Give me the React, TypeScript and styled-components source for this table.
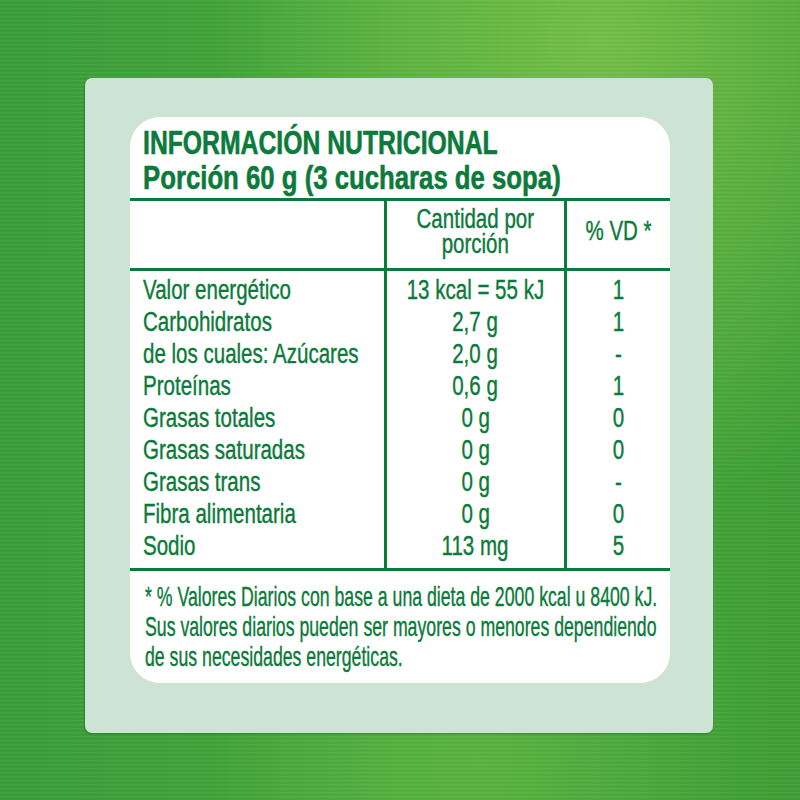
import React from 'react';
import styled, { createGlobalStyle } from 'styled-components';

const GlobalStyle = createGlobalStyle`
  html, body {
    margin: 0;
    padding: 0;
  }
  body {
    font-family: "Liberation Sans", Arial, sans-serif;
  }
`;

const INK = '#0b7a3a';

const Backdrop = styled.div`
  width: 800px;
  height: 800px;
  box-sizing: border-box;
  padding: 78px 87px 67px 85px;
  background:
    repeating-linear-gradient(
      180deg,
      rgba(255, 255, 200, 0.06) 0px,
      rgba(255, 255, 200, 0.06) 1px,
      rgba(0, 60, 0, 0.05) 2px,
      rgba(0, 0, 0, 0) 4px
    ),
    radial-gradient(ellipse at 75% 5%, rgba(150, 210, 80, 0.6) 0%, rgba(150, 210, 80, 0) 45%),
    radial-gradient(ellipse at 60% 95%, rgba(110, 190, 70, 0.5) 0%, rgba(110, 190, 70, 0) 40%),
    linear-gradient(90deg, #3a9d3a 0%, #47a83c 50%, #3e9f38 100%);
`;

const Panel = styled.div`
  height: 100%;
  box-sizing: border-box;
  padding: 39px 43px 50px 45px;
  background: #cde3d4;
  border-radius: 7px;
  box-shadow: -1px 1px 2px rgba(0, 70, 20, 0.35);
`;

const Card = styled.div`
  height: 100%;
  box-sizing: border-box;
  background: #ffffff;
  border-radius: 30px;
  padding-top: 8px;
  color: ${INK};
  overflow: hidden;
`;

// condensed look: the face is squeezed horizontally around the given origin
const Narrow = styled.span<{ $k: number; $origin?: 'left' | 'center' }>`
  display: inline-block;
  white-space: nowrap;
  transform: scaleX(${(p) => p.$k});
  transform-origin: ${(p) => p.$origin ?? 'left'} center;
  -webkit-text-stroke: 0.4px currentColor;
`;

const Title = styled.div`
  display: flex;
  flex-direction: column;
  align-items: flex-start;
  padding: 0 0 3px 13px;
  font-weight: 700;
  font-size: 33px;
  line-height: 35px;
  border-bottom: 3px solid ${INK};

  & > span {
    -webkit-text-stroke: 0.6px currentColor;
  }
`;

const Table = styled.div`
  display: grid;
  grid-template-columns: 254px 180px 106px;
  border-bottom: 3px solid ${INK};
`;

const Column = styled.div<{ $divider?: boolean }>`
  display: flex;
  flex-direction: column;
  border-left: ${(p) => (p.$divider ? `3px solid ${INK}` : 'none')};
`;

const HeadCell = styled.div`
  height: 70px;
  box-sizing: border-box;
  border-bottom: 3px solid ${INK};
  display: flex;
  flex-direction: column;
  justify-content: center;
  align-items: center;
  font-size: 27px;
  line-height: 25px;
  padding-bottom: 6px;
`;

const Values = styled.div<{ $indent?: boolean }>`
  padding: 3px 0 6px ${(p) => (p.$indent ? '13px' : '0')};
`;

const Value = styled.div<{ $center?: boolean }>`
  display: flex;
  justify-content: ${(p) => (p.$center ? 'center' : 'flex-start')};
  font-size: 27px;
  line-height: 32px;
`;

const Footnote = styled.div`
  display: flex;
  flex-direction: column;
  align-items: flex-start;
  padding: 11px 0 0 15px;
  font-size: 28px;
  line-height: 30px;
`;

const DATA_K = 0.76;

const rows: [string, string, string][] = [
  ['Valor energético', '13 kcal = 55 kJ', '1'],
  ['Carbohidratos', '2,7 g', '1'],
  ['de los cuales: Azúcares', '2,0 g', '-'],
  ['Proteínas', '0,6 g', '1'],
  ['Grasas totales', '0 g', '0'],
  ['Grasas saturadas', '0 g', '0'],
  ['Grasas trans', '0 g', '-'],
  ['Fibra alimentaria', '0 g', '0'],
  ['Sodio', '113 mg', '5'],
];

const notes = [
  '* % Valores Diarios con base a una dieta de 2000 kcal u 8400 kJ.',
  'Sus valores diarios pueden ser mayores o menores dependiendo',
  'de sus necesidades energéticas.',
];

const App: React.FC = () => {
  return (
    <>
      <GlobalStyle />
      <Backdrop>
        <Panel>
          <Card>
            <Title>
              <Narrow $k={0.75}>INFORMACIÓN NUTRICIONAL</Narrow>
              <Narrow $k={0.78}>Porción 60 g (3 cucharas de sopa)</Narrow>
            </Title>
            <Table>
              <Column>
                <HeadCell />
                <Values $indent>
                  {rows.map((r) => (
                    <Value key={r[0]}>
                      <Narrow $k={DATA_K}>{r[0]}</Narrow>
                    </Value>
                  ))}
                </Values>
              </Column>
              <Column $divider>
                <HeadCell>
                  <Narrow $k={DATA_K} $origin="center">Cantidad por</Narrow>
                  <Narrow $k={DATA_K} $origin="center">porción</Narrow>
                </HeadCell>
                <Values>
                  {rows.map((r) => (
                    <Value key={r[0]} $center>
                      <Narrow $k={DATA_K} $origin="center">{r[1]}</Narrow>
                    </Value>
                  ))}
                </Values>
              </Column>
              <Column $divider>
                <HeadCell>
                  <Narrow $k={DATA_K} $origin="center">% VD *</Narrow>
                </HeadCell>
                <Values>
                  {rows.map((r) => (
                    <Value key={r[0]} $center>
                      <Narrow $k={DATA_K} $origin="center">{r[2]}</Narrow>
                    </Value>
                  ))}
                </Values>
              </Column>
            </Table>
            <Footnote>
              {notes.map((n) => (
                <Narrow key={n} $k={0.632}>{n}</Narrow>
              ))}
            </Footnote>
          </Card>
        </Panel>
      </Backdrop>
    </>
  );
};

export default App;
